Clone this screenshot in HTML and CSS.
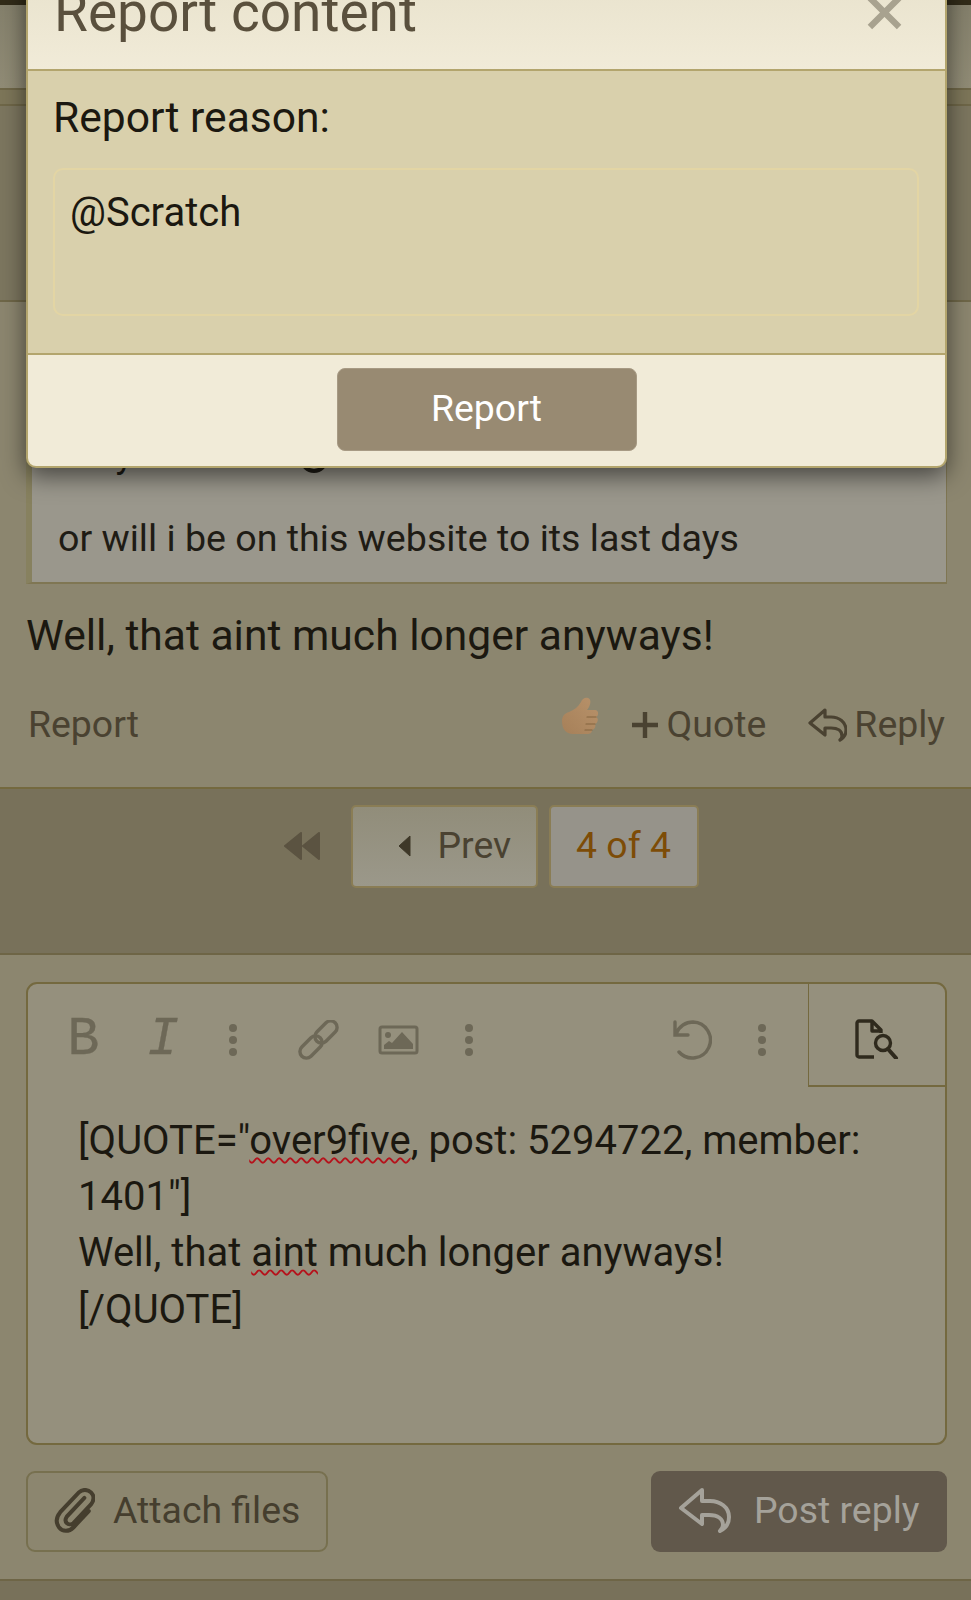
FILE: index.html
```html
<!DOCTYPE HTML>
<html>
  <head>
    <meta charset="utf-8">
    <title>Report content</title>
    <link rel="stylesheet" href="styles.css">
  </head>
  <body>
    <div class="page">
      <div class="top-strip"></div>
      <div class="top-nav"></div>
      <div class="top-band"></div>
      <div class="top-section"></div>

      <div class="post">
        <div class="quote">
          <div class="quote-line hidden-line">Holy smokes <span class="smile"></span></div>
          <div class="quote-line">or will i be on this website to its last days</div>
        </div>
        <p class="post-text">Well, that aint much longer anyways!</p>
        <div class="post-actions">
          <a class="action">Report</a>
          <span class="action-right">
            <svg class="thumb" viewBox="0 0 38 38">
              <defs>
                <linearGradient id="thumbFill" x1="0" y1="1" x2="1" y2="0">
                  <stop offset="0" stop-color="#a68059"></stop>
                  <stop offset="1" stop-color="#b8926a"></stop>
                </linearGradient>
              </defs>
              <path fill="url(#thumbFill)" d="M1 24C1 19 4 16 8 15 13 13 17 10 20 5 21 2 24 0 27 1 30 2 30 6 28 10L26 13H34C38 13 38 19 35 20 38 21 37 26 34 27 35 29 34 32 31 33 31 36 29 37 26 37H12C5 37 1 32 1 24Z"></path>
              <path fill="none" stroke="#84643f" stroke-width="1.2" stroke-linecap="round" d="M26 20H35M25 27H34M24 33H31"></path>
            </svg>
            <svg class="plus" viewBox="0 0 26 26"><path d="M13 0V26M0 13H26" stroke="currentColor" stroke-width="4.4"></path></svg>
            <a class="action action-quote">Quote</a>
            <svg class="reply-icon" viewBox="0 0 39 34"><path d="M17 2 2 15l15 12v-7h6c7 0 11 3 11 8 0 2-1 3-2 4 4-2 6-5 6-10 0-8-7-13-15-13h-6z" fill="none" stroke="currentColor" stroke-width="3.2" stroke-linejoin="round"></path></svg>
            <a class="action">Reply</a>
          </span>
        </div>
      </div>

      <div class="pager">
        <svg class="pager-first" viewBox="0 0 38 28"><path d="M18 1v26L2 14zM36 1v26L20 14z" fill="currentColor" stroke="currentColor" stroke-width="2" stroke-linejoin="round"></path></svg>
        <a class="page-btn page-prev"><svg class="prev-arrow" viewBox="0 0 13 22"><path d="M12 1v20L1 11z" fill="currentColor" stroke="currentColor" stroke-linejoin="round"></path></svg>Prev</a>
        <a class="page-btn page-current">4 of 4</a>
      </div>

      <div class="reply-area">
        <div class="editor">
          <div class="toolbar">
            <span class="tool-b">B</span>
            <span class="tool-i">I</span>
            <span class="dots dots-first"><i></i><i></i><i></i></span>
            <svg class="tool-link" viewBox="0 0 41 40">
              <g fill="none" stroke="currentColor" stroke-width="3.4">
                <rect x="0" y="20.5" width="26" height="13" rx="6.5" transform="rotate(-45 13 27)"></rect>
                <rect x="15" y="5.5" width="26" height="13" rx="6.5" transform="rotate(-45 28 12)"></rect>
              </g>
            </svg>
            <svg class="tool-image" viewBox="0 0 41 30">
              <rect x="2" y="2" width="37" height="26" rx="2" fill="none" stroke="currentColor" stroke-width="3"></rect>
              <circle cx="10" cy="10" r="3" fill="currentColor"></circle>
              <path d="M6 24v-4l5-4 3 2 10-11 11 12v5z" fill="currentColor"></path>
            </svg>
            <span class="dots dots-second"><i></i><i></i><i></i></span>
            <span class="tool-space"></span>
            <svg class="tool-undo" viewBox="0 0 40 40"><path d="M3 2V15H16M4 14C7 6 14 2 21 2A18 18 0 1 1 7 32" fill="none" stroke="currentColor" stroke-width="3.4" stroke-linecap="round"></path></svg>
            <span class="dots dots-third"><i></i><i></i><i></i></span>
            <span class="tool-preview">
              <svg viewBox="0 0 44 40"><path d="M19 38H4a2 2 0 0 1-2-2V4a2 2 0 0 1 2-2h13l9 9v3M17 2v10h9" fill="none" stroke="currentColor" stroke-width="3.4" stroke-linejoin="round"></path><circle cx="28" cy="24" r="7.5" fill="none" stroke="currentColor" stroke-width="3.4"></circle><path d="M33 30l8 9" stroke="currentColor" stroke-width="4" stroke-linecap="round"></path></svg>
            </span>
          </div>
          <div class="editor-text">
            <div>[QUOTE="<span class="spell">over9five</span>, post: 5294722, member: 1401"]</div>
            <div>Well, that <span class="spell">aint</span> much longer anyways!</div>
            <div>[/QUOTE]</div>
          </div>
        </div>
        <div class="form-buttons">
          <a class="btn-attach">
            <svg class="clip" viewBox="2 4 36 41"><path d="M29 13 13 30c-2 3-1 5 0 6s4 2 6 0L35 19c3-4 3-8 0-11s-8-3-11 0L7 26c-4 5-4 10-1 14s9 4 13 0l14-15" fill="none" stroke="currentColor" stroke-width="3.6" stroke-linecap="round"></path></svg>Attach files
          </a>
          <a class="btn-post">
            <svg class="post-icon" viewBox="0 0 53 45"><path d="M24 2 3 20l21 16V27h7c9 0 14 4 14 10 0 2-1 4-3 6 6-3 9-8 9-14 0-10-9-16-19-16h-8z" fill="none" stroke="currentColor" stroke-width="4" stroke-linejoin="round"></path></svg>Post reply
          </a>
        </div>
      </div>
      <div class="page-bottom"></div>

      <div class="modal">
        <div class="modal-head">
          <h2 class="modal-title">Report content</h2>
          <svg class="modal-close" viewBox="0 0 36 36"><path d="M3 3l30 30M33 3L3 33" stroke="currentColor" stroke-width="6.5"></path></svg>
        </div>
        <div class="modal-body">
          <label class="reason-label">Report reason:</label>
          <div class="reason-input">@Scratch</div>
        </div>
        <div class="modal-foot">
          <a class="btn-report">Report</a>
        </div>
      </div>
    </div>
  </body>
</html>
```

FILE: styles.css
```css
body{margin:0; padding:0; font-family:Roboto, "Liberation Sans", sans-serif; color:#1b1810; background:#8c866f}
a{display:block; text-decoration:none}
svg{display:block; flex:none}

.page{position:relative; height:1600px; overflow:hidden; font-size:37.4px}

/* stuff behind the overlay */
.top-strip{height:5px; background:#322c19}
.top-nav{height:83px; background:linear-gradient(#85816c, #918c76)}
.top-band{height:18px; background:#7d7659; border-top:2px solid #6f6748; border-bottom:2px solid #6f6748; box-sizing:border-box}
.top-section{height:196px; background:#7c765f; border-bottom:2px solid #6f6748; box-sizing:border-box}

.post{background:#8c866f; padding:98px 24px 0 26px; height:487px; border-bottom:2px solid #74693f; box-sizing:border-box}
.quote{background:#9a978c; border:solid #7f7653; border-width:0 1px 2px 0; border-left:6px solid #87815f; padding:32px 0 0 26px; height:184px; box-sizing:border-box; font-size:37.6px}
.quote-line{height:44px; line-height:44px; color:#1f1c15}
.hidden-line{height:84px}
.smile{display:inline-block; width:28px; height:28px; margin-left:16px; border:4px solid #1f1c15; border-radius:50%; box-sizing:border-box; vertical-align:-6px}
.post-text{margin:26px 0 0; font-size:42.6px; line-height:50px; color:#1b1810}
.post-actions{display:flex; justify-content:space-between; align-items:center; height:44px; margin-top:42px; padding:0 2px 0 2px; color:#4a4231}
.action{color:#4a4231}
.action-right{display:flex; align-items:center; color:#4a4231}
.thumb{width:38px; height:38px; margin:-16px 33px 0 0}
.plus{width:26px; height:26px; margin:2px 9px 0 0}
.reply-icon{width:39px; height:34px; margin:2px 7px 0 42px}

.pager{display:flex; align-items:flex-start; justify-content:center; gap:11px; height:166px; padding:16px 0 0 10px; box-sizing:border-box; background:#78715a; border-bottom:2px solid #6e6546}
.pager-first{width:38px; height:28px; margin:27px 19px 0 0; color:#5b5341}
.page-btn{display:flex; align-items:center; height:83px; box-sizing:border-box; padding-bottom:4px; border:2px solid #8a7d55; border-radius:5px}
.page-prev{width:187px; padding-left:45px; background:linear-gradient(#918d7a, #9b988a); color:#4a4231}
.prev-arrow{width:13px; height:22px; margin:2px 27px 0 0; color:#3e3828}
.page-current{width:150px; justify-content:center; background:#96938a; color:#7d4c07}

.reply-area{padding:27px 24px 0 26px}
.editor{border:2px solid #74693f; border-radius:11px; height:463px; box-sizing:border-box; background:#95907d; overflow:hidden}
.toolbar{display:flex; align-items:center; height:103px; box-sizing:border-box; padding-top:8px; color:#6d6857}
.tool-b{font-family:"Liberation Mono", monospace; -webkit-text-stroke:.4px #6d6857; font-size:53px; line-height:44px; margin-left:41px; width:29px; display:flex; justify-content:center}
.tool-i{font-family:"Liberation Mono", monospace; -webkit-text-stroke:.3px #6d6857; font-style:italic; font-size:53px; line-height:44px; margin-left:52px; width:26px; display:flex; justify-content:center}
.dots{display:flex; flex-direction:column; gap:4px}
.dots i{display:block; width:8px; height:8px; border-radius:50%; background:#6d6857}
.dots-first{margin-left:53px}
.dots-second{margin-left:46px}
.dots-third{margin-left:46px}
.tool-link{width:41px; height:40px; margin-left:61px}
.tool-image{width:41px; height:30px; margin-left:39px}
.tool-space{flex:1}
.tool-undo{width:40px; height:40px}
.tool-preview{display:flex; align-items:center; justify-content:center; width:137px; height:103px; margin:-8px 0 0 42px; padding-top:8px; border-left:1px solid #74693f; border-bottom:2px solid #74693f; box-sizing:border-box; color:#2f2a1d}
.tool-preview svg{width:44px; height:40px}
.editor-text{padding:26px 50px 0 50px; line-height:56.2px; font-size:40px; color:#1b1810}
.spell{text-decoration:underline wavy #b5121b 2px; text-underline-offset:3px}

.form-buttons{display:flex; justify-content:space-between; margin-top:26px}
.btn-attach{display:flex; align-items:center; width:302px; height:81px; box-sizing:border-box; padding:0 0 4px 26px; border:2px solid #77704f; border-radius:9px; color:#453e2e}
.clip{width:41px; height:45px; margin:2px 18px 0 0}
.btn-post{display:flex; align-items:center; width:296px; height:81px; box-sizing:border-box; padding:0 0 4px 27px; border-radius:9px; background:#61584b; color:#a5a29a}
.post-icon{width:53px; height:45px; margin:2px 23px 0 0}
.page-bottom{height:30px; margin-top:27px; background:#78715a; border-top:2px solid #6e6546}

/* modal lies over the page */
.modal{position:absolute; left:26px; top:-38px; width:921px; box-sizing:border-box; background:#f1ebd8; border:solid #b3a56d; border-width:0 2px 2px; border-radius:0 0 10px 10px; box-shadow:0 8px 24px rgba(0,0,0,.55)}
.modal-head{display:flex; justify-content:space-between; height:109px; box-sizing:border-box; padding:0 43px 0 26px; background:linear-gradient(#e7e1cb, #f1ebd8); border-bottom:2px solid #b3a56d}
.modal-title{margin:0; font-size:55px; font-weight:400; line-height:52px; padding-top:24px; color:#5a503d}
.modal-close{width:35px; height:35px; margin-top:33px; color:#a8a28f}
.modal-body{background:#d9d0ac; height:284px; box-sizing:border-box; padding:23px 26px 0 25px; border-bottom:2px solid #b3a56d}
.reason-label{display:block; font-size:42.6px; line-height:46px; color:#1b1810}
.reason-input{height:148px; box-sizing:border-box; margin-top:28px; padding:20px 15px; border:2px solid #e3d5a4; border-radius:10px; font-size:40px; line-height:46px; color:#1b1810}
.modal-foot{display:flex; justify-content:center; padding:13px 0 15px}
.btn-report{width:300px; height:83px; line-height:78px; text-align:center; box-sizing:border-box; border-radius:8px; border:1px solid #a79a84; background:#988a72; color:#fff}
```
